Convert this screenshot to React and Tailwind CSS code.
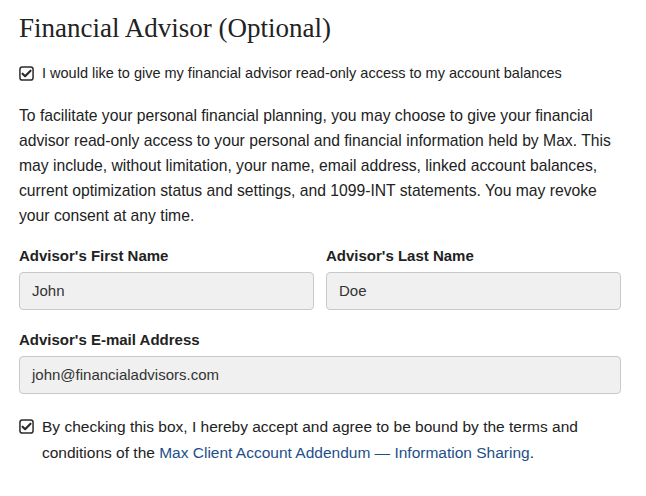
import React from 'react';

function CheckIcon() {
  return (
    <svg viewBox="0 0 16 16" className="w-[15px] h-[15px] shrink-0" aria-hidden="true">
      <rect x="1" y="1" width="14" height="14" rx="2.5" fill="none" stroke="#2b2b2b" strokeWidth="1.6" />
      <path d="M3.8 8.2l2.7 2.7 5.8-5.9" fill="none" stroke="#2b2b2b" strokeWidth="2.3" strokeLinecap="round" strokeLinejoin="round" />
    </svg>
  );
}

function Field({ label, value }) {
  return (
    <div className="flex flex-col flex-1">
      <label className="text-[15px] font-bold text-[#222] leading-[20px] mb-[6px]">{label}</label>
      <div className="h-[38px] rounded-[4px] border border-[#c9c9c9] bg-[#f0f0f0] flex items-center px-[12px] text-[15px] text-[#333]">
        {value}
      </div>
    </div>
  );
}

export default function App() {
  return (
    <div className="bg-white w-[646px] h-[496px] pl-[19px] pr-[25px] pt-[12px] text-[#222]" style={{ fontFamily: '"Liberation Sans", Arial, sans-serif' }}>
      {/* Заголовок */}
      <h1 className="text-[27px] leading-[32px] text-[#222]" style={{ fontFamily: '"Liberation Serif", "DejaVu Serif", serif' }}>
        Financial Advisor (Optional)
      </h1>

      <div className="flex items-center gap-[8px] mt-[20px] text-[14.5px] leading-[18px]">
        <CheckIcon />
        <span>I would like to give my financial advisor read-only access to my account balances</span>
      </div>

      <p className="mt-[21px] text-[15.7px] leading-[25px]">
        To facilitate your personal financial planning, you may choose to give your financial advisor read-only access to your personal and financial information held by Max. This may include, without limitation, your name, email address, linked account balances, current optimization status and settings, and 1099-INT statements. You may revoke your consent at any time.
      </p>

      <div className="flex gap-[12px] mt-[18px]">
        <Field label="Advisor's First Name" value="John" />
        <Field label="Advisor's Last Name" value="Doe" />
      </div>

      <div className="flex mt-[20px]">
        <Field label="Advisor's E-mail Address" value="john@financialadvisors.com" />
      </div>

      <div className="flex items-start gap-[8px] mt-[20px] text-[15.5px] leading-[26px]">
        <div className="pt-[5px]">
          <CheckIcon />
        </div>
        <p className="pr-[30px]">
          By checking this box, I hereby accept and agree to be bound by the terms and conditions of the{' '}
          <a className="text-[#1d4f8a]">Max Client Account Addendum — Information Sharing</a>.
        </p>
      </div>
    </div>
  );
}
